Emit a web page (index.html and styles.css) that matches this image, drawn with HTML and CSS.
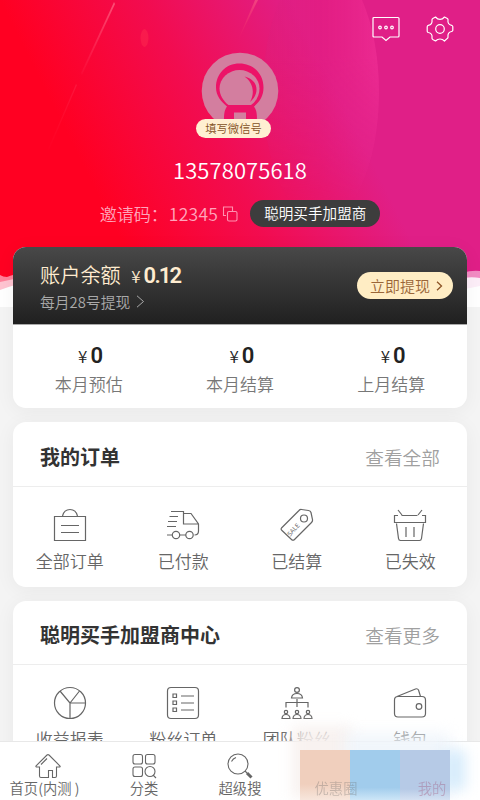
FILE: index.html
```html
<!DOCTYPE html>
<html lang="zh-CN">
<head>
<meta charset="utf-8">
<title>我的</title>
<link rel="stylesheet" href="styles.css">
</head>
<body>
<div class="app">
<main class="content">
  <svg class="hero-bg" width="480" height="307" viewBox="0 0 480 307" aria-hidden="true">
    <defs>
      <linearGradient id="base" gradientUnits="userSpaceOnUse" x1="40" y1="80" x2="272" y2="-37"><stop offset="0" stop-color="#ff0022"/><stop offset=".5" stop-color="#f20c50"/><stop offset="1" stop-color="#e01f87"/></linearGradient>
      <linearGradient id="orb" x1="0" x2="1"><stop offset="0" stop-color="#db207d" stop-opacity=".35"/><stop offset=".5" stop-color="#e61c80" stop-opacity=".4"/><stop offset="1" stop-color="#f03096" stop-opacity=".7"/></linearGradient>
      <linearGradient id="fade" x1="0" y1="0" x2="0" y2="1"><stop offset="0" stop-color="#fff"/><stop offset=".35" stop-color="#fff"/><stop offset=".9" stop-color="#000"/></linearGradient>
      <mask id="orbMask"><rect x="250" y="-40" width="140" height="275" fill="url(#fade)"/></mask>
      <linearGradient id="ray" x1="1" y1="0" x2="0" y2="1"><stop offset="0" stop-color="#ff6a88" stop-opacity=".75"/><stop offset="1" stop-color="#ff3d64" stop-opacity=".1"/></linearGradient>
    </defs>
    <path fill="#fff" d="M0 0h480v307H0z"/>
    <path fill="#ffc4d1" d="M0 260h40v20Q15 284 0 290z"/>
    <path fill="#ff819a" d="M0 260h30v22L14 279 0 282z"/>
    <path fill="#fdeef8" d="M440 260h40v26q-20 4-40 8z"/>
    <path fill="#f28cc3" d="M440 260h40v18q-10-2-22 1z"/>
    <path fill="url(#base)" d="M0 0h480v271q-8-1-18 2H25q-12 1-18 4-4 0-7-2z"/>
    <ellipse cx="321" cy="92" rx="58" ry="130" fill="url(#orb)" mask="url(#orbMask)"/>
    <path fill="url(#ray)" d="M114 2l1 2-33 71-1-2z"/>
    <path fill="url(#ray)" opacity=".25" d="M76 84l1 1-28 65-1-1z"/>
    <path fill="url(#ray)" opacity=".7" d="M255 0h3l-20 40z"/>
    <ellipse cx="144.500" cy="38" rx="4" ry="9" fill="#ff3150" opacity=".42"/>
  </svg>

  <header class="hero">
    <div class="tools">
      <svg class="chat" width="28" height="26" viewBox="0 0 28 26" fill="none" stroke="#fff" stroke-width="1.200"><path d="M2 1.500h24q1 0 1 1v17.500q0 1-1 1h-8l-4 3.500-4-3.500H2q-1 0-1-1V2.500q0-1 1-1z"/><circle cx="8" cy="11.500" r="1.300"/><circle cx="14" cy="11.500" r="1.300"/><circle cx="20" cy="11.500" r="1.300"/></svg>
      <svg width="28" height="26" viewBox="0 0 28 26" fill="none" stroke="#fff" stroke-width="1.200" stroke-linejoin="round"><path d="M6.800 2.500 9.500 1q2 2.400 4.500 2.400T18.500 1l2.800 1.500q1 .6.700 1.700c-.4 2.600 1 4.600 3.600 5.100q1 .3 1.200 1.400v3.600q-.2 1-1.200 1.200c-2.500.6-4 2.600-3.600 5.300q.2 1-.7 1.600L18.500 25q-2-2-4.500-2t-4.500 2l-2.700-1.500q-1-.6-.8-1.700c.4-2.600-1-4.800-3.700-5.300q-1-.3-1.100-1.300v-4.500q.1-1 1.100-1.300C5 8.900 6.400 6.900 6 4.200q-.2-1.100.8-1.700z"/><circle cx="14" cy="13" r="4.300"/></svg>
    </div>
    <div class="profile">
      <svg class="avatar" width="78" height="78" viewBox="0 0 78 78"><circle cx="39" cy="39" r="38.300" fill="#d37e9f"/><path fill="#ec1368" d="M38.500 11.500c14 0 24 10.500 24 24 0 8-3.500 14-9.500 19 3 4 3 9 3 14H23c0-5 0-10 3-14-6-5-11-11-11-19 0-13.500 9.500-24 23.500-24z"/><path fill="#d37e9f" d="M27.500 53C22 49 18.500 42.500 18.500 36.500a20 18.500 0 0 1 40 0C58.500 42.500 56 49 50 53z"/><path fill="#ec1368" d="M43.500 24.500c8 2 12 7 12 13 0 5-2.500 9.500-6.500 12.500C54.500 40 51.500 30 43.500 24.500z"/><path fill="#d37e9f" d="M33 60.500h12v8H33z"/></svg>
      <span class="wechat">填写微信号</span>
    </div>
    <div class="phone">13578075618</div>
    <div class="invite"><span>邀请码：</span><span class="code">12345</span>
      <svg width="16" height="16" viewBox="0 0 16 16" fill="none" stroke="#ff91b0" stroke-width="1.100"><path d="M4 9.500H1.500V1h9v4"/><rect x="5.500" y="5.500" width="9.500" height="9.500" rx="1.500"/></svg>
      <span class="level">聪明买手加盟商</span></div>
  </header>

  <section class="card wallet">
    <div class="balance">
      <div class="funds">
        <div class="amount">账户余额 <i>¥</i><b>0.12</b></div>
        <div class="note">每月28号提现 <svg width="9" height="13" viewBox="0 0 9 13" fill="none" stroke="#aaa"><path d="M1 .8 7.500 6.500 1 12.200"/></svg></div>
      </div>
      <div class="withdraw">立即提现 <svg width="7" height="10" viewBox="0 0 7 10" fill="none" stroke="#8c5426" stroke-width="1.300"><path d="M1 .8 5.500 5 1 9.200"/></svg></div>
    </div>
    <div class="stats">
      <div><p><i>¥</i><b>0</b></p><span>本月预估</span></div>
      <div><p><i>¥</i><b>0</b></p><span>本月结算</span></div>
      <div><p><i>¥</i><b>0</b></p><span>上月结算</span></div>
    </div>
  </section>

  <section class="card">
    <div class="head"><h2>我的订单</h2><span>查看全部</span></div>
    <div class="grid">
      <div><svg class="icon" viewBox="0 0 34 34"><path d="M1.500 8.500h31v24h-31zM9.500 8q1.500-6.500 7.500-6.500T24.500 8M8 17.500h18M8 24.500h18"/></svg><span>全部订单</span></div>
      <div><svg class="icon" viewBox="0 0 34 34"><path d="M5 3.500h12.500V16H32M17.500 5.500H25l7.500 10.500v7q0 4-4 4M14 27h6M1 27h5M3.500 8.500H12M2 13.500h9M1 18.500h9"/><circle cx="10" cy="27" r="3.700"/><circle cx="23.500" cy="27" r="3.700"/></svg><span>已付款</span></div>
      <div><svg class="icon" viewBox="0 0 34 34"><path d="M1.500 20 19 2.500q1-1.200 2.500-1l7 1q2 .3 2.500 2l1.500 7q.3 1.700-1 3l-17 17q-1.500 1.500-3 0l-9.500-9q-1.500-1.200-.5-2.500z"/><circle cx="24" cy="10.500" r="3.500"/><text x="-9" y="3" transform="translate(14 20) rotate(-48)" class="sale">SALE</text></svg><span>已结算</span></div>
      <div><svg class="icon" viewBox="0 0 34 34"><path d="M8.500 7.500h16M5 7.500H1.500v7h31v-7H29M5 2l4 5M29 2l-4 5M3.500 15.500l2 15q.3 2 2 2h19q1.700 0 2-2l2-15M13 19v10M21 19v10"/></svg><span>已失效</span></div>
    </div>
  </section>

  <section class="card center">
    <div class="head"><h2>聪明买手加盟商中心</h2><span>查看更多</span></div>
    <div class="grid">
      <div><svg class="icon" viewBox="0 0 34 34"><circle cx="17" cy="17" r="15.500"/><path d="M17 32.500V17L7 5M17 17 26.500 5M17 17h15.500"/></svg><span>收益报表</span></div>
      <div><svg class="icon" viewBox="0 0 34 34"><rect x="1.500" y="1.500" width="31" height="31" rx="3.500"/><path d="M7 8h3.500v3.500H7zM7 15h3.500v3.500H7zM7 22h3.500v3.500H7zM15 10h13M15 17h13M15 24h13"/></svg><span>粉丝订单</span></div>
      <div><svg class="icon" viewBox="0 0 34 34"><circle cx="17" cy="4" r="2.400"/><path d="M11.500 12q.5-4.500 5.500-4.500t5.500 4.500zM17 13v8M6 21.500v-5h22v5M2 32.500q.3-4 4-4t4 4zM13 32.500q.3-4 4-4t4 4zM24 32.500q.3-4 4-4t4 4z"/><circle cx="6" cy="26" r="1.700"/><circle cx="17" cy="26" r="1.700"/><circle cx="28" cy="26" r="1.700"/></svg><span>团队粉丝</span></div>
      <div><svg class="icon" viewBox="0 0 34 34"><rect x="1.500" y="10.500" width="31" height="20.500" rx="3.500"/><path d="M4 10.500 22.500 3q2-.8 3 1l2 6.500"/><circle cx="26" cy="20.500" r="2.800"/></svg><span>钱包</span></div>
    </div>
  </section>
</main>

<nav class="tabs">
  <div><svg viewBox="0 0 26 26"><path d="M4.500 14H1.300q-.8-.4-.2-1.200L12 2q1-.8 2 0l11 11q.5.800-.3 1h-3.200v9q0 1.500-1.500 1.500h-2.500v-7h-4v7H6q-1.500 0-1.500-1.500zM6 11.500 12 5.500"/></svg><span class="home">首页(内测 )</span></div>
  <div><svg viewBox="0 0 26 26"><rect x="2" y="1.500" width="9.500" height="9.500" rx="2"/><rect x="14.500" y="1.500" width="9.500" height="9.500" rx="2"/><rect x="2" y="14" width="9.500" height="9.500" rx="2"/><circle cx="19" cy="18.500" r="5"/><path d="m22 22 3 3"/></svg><span>分类</span></div>
  <div><svg viewBox="0 0 26 26"><circle cx="11" cy="11" r="10"/><path d="M4.500 8.500Q6 5.500 9 4.500"/><path d="m18 18 2 2"/><path class="handle" d="m20 20 4.500 4.500"/></svg><span>超级搜</span></div>
  <div><svg viewBox="0 0 26 26"></svg><span>优惠圈</span></div>
  <div><svg viewBox="0 0 26 26"></svg><span class="mine">我的</span></div>
</nav>
<div class="haze" aria-hidden="true"><i class="warm"></i><i class="cool"></i><i class="edge"></i></div>
<div class="mosaic" aria-hidden="true"><i></i><i></i><i></i></div>
</div>
</body>
</html>
```
FILE: styles.css
```css
* { box-sizing: border-box; }
body { margin: 0; background: #f4f4f4; font-family: "Noto Sans CJK SC", sans-serif; font-weight: 350; color: #666; }
i { font-style: normal; }
p, h2 { margin: 0; }
svg { display: block; flex: none; }
.app { position: relative; display: flex; flex-direction: column; width: 480px; height: 800px; overflow: hidden; }
.content { position: relative; flex: 1; min-height: 0; overflow: hidden; padding: 0 13px; }
.hero-bg { position: absolute; left: 0; top: 0; }
.hero { position: relative; height: 247px; display: flex; flex-direction: column; align-items: center; }
.tools { align-self: flex-end; display: flex; gap: 26px; padding: 16px 13px 0 0; height: 52px; }
.profile { display: flex; flex-direction: column; align-items: center; height: 86px; }
.wechat { position: relative; margin-top: -11px; margin-right: 13px; width: 75px; height: 19px; border-radius: 10px; background: #ffefd2; color: #83511f; font-size: 11.300px; line-height: 18px; text-align: center; }
.phone { margin-top: 15px; height: 32px; line-height: 32px; font-size: 22px; color: #fff; letter-spacing: .1px; }
.invite { display: flex; align-items: center; margin-top: 15px; height: 27px; line-height: 26px; font-size: 17px; color: #ffa5bc; white-space: nowrap; }
.code { font-size: 17.500px; letter-spacing: .3px; margin: 0 4px 0 1px; }
.level { margin-left: 12px; width: 130px; height: 27px; line-height: 26px; border-radius: 14px; background: #3d3d3d; color: #fff; font-size: 14.600px; text-align: center; }
.card { position: relative; margin-bottom: 14px; border-radius: 13px; background: #fff; box-shadow: 0 3px 20px rgba(0,0,0,.05); }
.wallet { height: 161px; overflow: hidden; }
.balance { display: flex; align-items: center; justify-content: space-between; height: 78px; padding: 0 14px 0 27px; background: linear-gradient(#484848, #202020); border-bottom: 1px solid #aaa; }
.funds { padding-top: 4px; }
.amount { height: 28px; line-height: 28px; font-size: 20.200px; color: #ffecd0; white-space: nowrap; }
.amount i { margin-left: 6px; font-size: 17px; }
b { font-family: Roboto, sans-serif; font-weight: 600; font-size: 22px; letter-spacing: -1.800px; margin-left: 3px; }
.note { display: flex; align-items: center; gap: 6px; height: 25px; font-size: 14.800px; color: #aaa; }
.withdraw { display: flex; align-items: center; justify-content: center; gap: 6px; width: 96px; height: 27px; line-height: 26px; border-radius: 14px; background: #ffedc4; color: #9a6638; font-size: 15px; padding-left: 3px; }
.stats { display: grid; grid-template-columns: repeat(3, 1fr); padding-top: 17px; text-align: center; font-size: 17px; color: #777; }
.stats p { height: 28px; line-height: 28px; color: #222; padding-left: 2px; }
.stats i { font-size: 17px; }
.stats span { display: block; height: 28px; line-height: 28px; }
.head { display: flex; align-items: center; justify-content: space-between; height: 65px; padding: 4px 27px 0; border-bottom: 1px solid #ededed; }
.head h2 { font-size: 20px; font-weight: 700; color: #333; }
.head span { font-size: 18.700px; color: #a0a0a0; }
.grid { display: grid; grid-template-columns: repeat(4, 1fr); height: 100px; padding-top: 21px; }
.center .head { height: 64px; }
.grid div, .tabs div { display: flex; flex-direction: column; align-items: center; }
.icon { width: 34px; height: 34px; fill: none; stroke: #666; stroke-width: 1.200; }
.grid span { margin-top: 6px; font-size: 17px; line-height: 26px; }
.sale { font: 6.500px "Noto Sans", sans-serif; fill: #666; stroke: none; }
.tabs { display: grid; grid-template-columns: repeat(5, 1fr); height: 59px; padding: 11px 0 0; background: #fff; border-top: 1px solid #e8e8e8; }
.tabs svg { width: 26px; height: 26px; fill: none; stroke: #666; stroke-width: 1.100; }
.tabs .handle { stroke-width: 3; }
.tabs span { margin-top: -2px; font-size: 14.300px; line-height: 22px; white-space: nowrap; }
.tabs .home { margin-right: 7px; }
.tabs div:nth-child(n+4) { position: relative; z-index: 3; opacity: .32; }
.tabs .mine { color: #9c4169; }
.mosaic { position: absolute; left: 300px; bottom: 0; display: flex; width: 150px; height: 50px; }
.mosaic i { width: 50px; background: linear-gradient(#f0cfbd 68%, #f7e6dc); }
.mosaic i:nth-child(2) { background: linear-gradient(#a1ccec 75%, #cde6f7); }
.mosaic i:nth-child(3) { background: linear-gradient(#b6cae6 78%, #d5e1f2); }
.haze { position: absolute; inset: 0; overflow: hidden; }
.haze i { position: absolute; filter: blur(7px); }
.warm { left: 292px; top: 726px; width: 60px; height: 72px; background: rgba(247,241,238,.9); }
.cool { left: 345px; top: 733px; width: 105px; height: 65px; background: rgba(238,244,250,.85); }
.edge { left: 443px; top: 750px; width: 22px; height: 40px; background: #d5ebfb; }
```
